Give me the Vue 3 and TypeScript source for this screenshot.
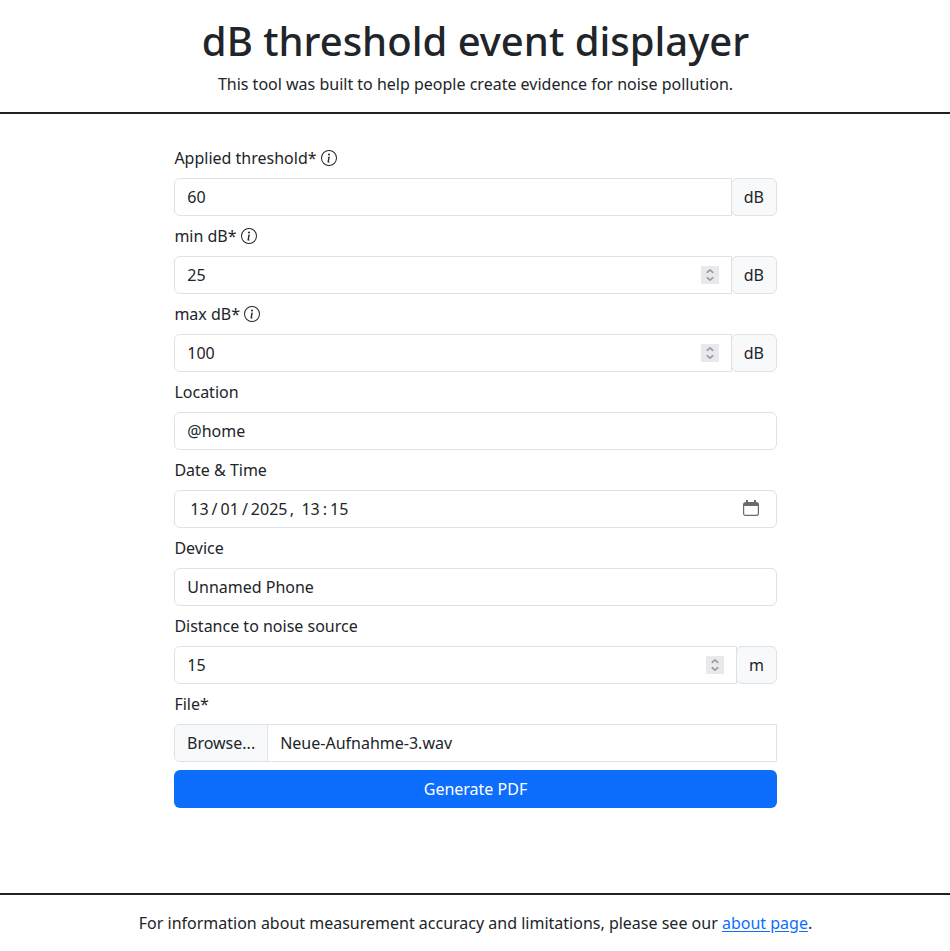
<script setup lang="ts">
import { reactive } from 'vue'

interface Field {
  id: string
  label: string
  info?: boolean
  unit?: string
  stepper?: boolean
}

const fields: Field[] = [
  { id: 'threshold', label: 'Applied threshold*', info: true, unit: 'dB' },
  { id: 'min', label: 'min dB*', info: true, unit: 'dB', stepper: true },
  { id: 'max', label: 'max dB*', info: true, unit: 'dB', stepper: true },
  { id: 'location', label: 'Location' },
  { id: 'date', label: 'Date & Time' },
  { id: 'device', label: 'Device' },
  { id: 'distance', label: 'Distance to noise source', unit: 'm', stepper: true },
]

const values = reactive<Record<string, string>>({
  threshold: '60',
  min: '25',
  max: '100',
  location: '@home',
  device: 'Unnamed Phone',
  distance: '15',
})

const dateParts = ['13', '/', '01', '/', '2025', ',', '13', ':', '15']
</script>

<template>
  <div class="page">
    <header>
      <h1>dB threshold event displayer</h1>
      <p>This tool was built to help people create evidence for noise pollution.</p>
    </header>
    <main>
      <form @submit.prevent>
        <div v-for="f in fields" :key="f.id" class="field">
          <label :for="f.id">{{ f.label }}
            <svg v-if="f.info" class="info" viewBox="0 0 16 16" fill="currentColor">
              <path d="M8 15A7 7 0 1 1 8 1a7 7 0 0 1 0 14m0 1A8 8 0 1 0 8 0a8 8 0 0 0 0 16" />
              <path d="m8.930 6.588-2.290.287-.082.380.450.083c.294.070.352.176.288.469l-.738 3.468c-.194.897.105 1.319.808 1.319.545 0 1.178-.252 1.465-.598l.088-.416c-.200.176-.492.246-.686.246-.275 0-.375-.193-.304-.533zM9 4.500a1 1 0 1 1-2 0 1 1 0 0 1 2 0" />
            </svg>
          </label>
          <div class="group">
            <div class="control" :class="{ joined: f.unit }">
              <template v-if="f.id === 'date'">
                <div class="date">
                  <span v-for="(p, i) in dateParts" :key="i" :class="['part', 'part-' + i]">{{ p }}</span>
                </div>
                <svg class="calendar" viewBox="0 0 16 16">
                  <path fill="none" stroke="currentColor" stroke-width="1.200" d="M2.500 2.600h11a1.900 1.900 0 0 1 1.900 1.900v9a1.900 1.900 0 0 1-1.900 1.900h-11a1.900 1.900 0 0 1-1.900-1.900v-9A1.900 1.900 0 0 1 2.500 2.600z" />
                  <path fill="currentColor" d="M1 3h14v3H1zM3 0h2v3H3zM11 0h2v3h-2z" />
                </svg>
              </template>
              <input v-else :id="f.id" v-model="values[f.id]" type="text" />
              <span v-if="f.stepper" class="stepper">
                <svg viewBox="0 0 18 18" fill="none" stroke="currentColor" stroke-width="1.700" stroke-linecap="round" stroke-linejoin="round">
                  <path d="M6.200 6.300 9 3.800l2.800 2.500M6.200 11.700 9 14.200l2.800-2.500" />
                </svg>
              </span>
            </div>
            <span v-if="f.unit" class="unit">{{ f.unit }}</span>
          </div>
        </div>
        <div class="field">
          <label>File*</label>
          <div class="file">
            <span class="browse">Browse...</span>
            <span class="filename">Neue-Aufnahme-3.wav</span>
          </div>
        </div>
        <button type="submit">Generate PDF</button>
      </form>
    </main>
    <footer>
      <p>For information about measurement accuracy and limitations, please see our <a href="#">about page</a>.</p>
    </footer>
  </div>
</template>

<style>
body {
  margin: 0;
}
</style>

<style scoped>
* {
  box-sizing: border-box;
}
.page {
  display: flex;
  flex-direction: column;
  height: 951px;
  font: 16px/24px 'Noto Sans', sans-serif;
  color: #212529;
  background: #fff;
}
header {
  height: 114px;
  padding: 17px 0 0 1px;
  border-bottom: 2px solid #212022;
  text-align: center;
}
h1 {
  margin: 0 0 7px;
  font-size: 40px;
  font-weight: 500;
  line-height: 48px;
}
p {
  margin: 0;
}
main {
  flex: 1;
  padding: 32px 173px 0 174px;
}
form {
  display: flex;
  flex-direction: column;
}
.field {
  margin-bottom: 8px;
}
label {
  display: block;
  height: 24px;
  margin-bottom: 8px;
  padding-left: 0.4px;
}
.info {
  width: 16px;
  height: 16px;
  vertical-align: -2px;
}
.group,
.file {
  display: flex;
  height: 38px;
}
.control {
  display: flex;
  flex: 1;
  align-items: center;
  min-width: 0;
  padding: 0 12px 0 12.3px;
  border: 1px solid #dee2e6;
  border-radius: 6px;
}
.joined {
  border-radius: 6px 0 0 6px;
}
input {
  flex: 1;
  min-width: 0;
  height: 24px;
  padding: 0;
  border: 0;
  outline: 0;
  background: transparent;
  color: inherit;
  font: inherit;
}
.unit {
  margin-left: -1px;
  padding: 6px 12px;
  border: 1px solid #dee2e6;
  border-radius: 6px;
  background: #f8f9fa;
}
.stepper {
  width: 18px;
  height: 18px;
  background: #e9e9ed;
  color: #9a9aa5;
}
.stepper svg {
  display: block;
}
.date {
  display: flex;
  flex: 1;
  padding-left: 3px;
}
.part-1,
.part-3 {
  padding: 0 3px;
}
.part-5 {
  padding: 0 7.5px 0 2.2px;
}
.part-7 {
  padding: 0 3px;
}
.calendar {
  width: 16px;
  height: 16px;
  margin: 0 5px 2px 0;
  color: #6b6b6b;
}
.file {
  border: 1px solid #dee2e6;
  border-radius: 6px 0 0 6px;
  overflow: hidden;
}
.browse {
  padding: 6px 12px;
  border-right: 1px solid #dee2e6;
  background: #f8f9fa;
}
.filename {
  padding: 6px 12px;
}
button {
  height: 38px;
  padding: 0;
  border: 0;
  border-radius: 6px;
  background: #0d6efd;
  color: #fff;
  font: inherit;
}
footer {
  height: 58px;
  padding: 16px 0 0 1px;
  border-top: 2px solid #212022;
  text-align: center;
}
a {
  color: #0d6efd;
  text-underline-offset: 2px;
}
</style>
